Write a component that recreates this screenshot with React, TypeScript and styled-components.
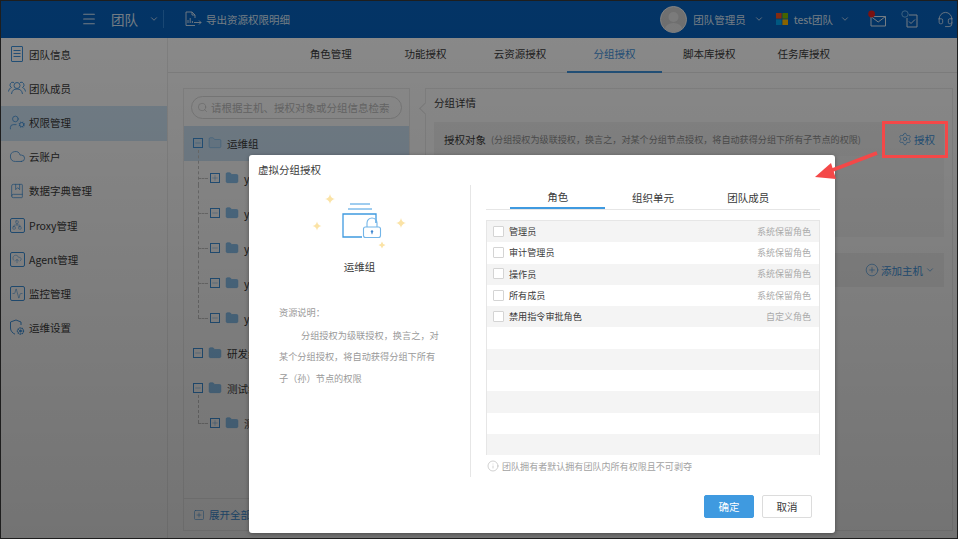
import React from "react";
import styled, { createGlobalStyle } from "styled-components";
import {
  Activity,
  BookMarked,
  ChevronDown,
  Cloud,
  CloudUpload,
  Headset,
  Info,
  Menu,
  Network,
  Search,
  Settings,
  UserCog,
  CirclePlus,
  Folder,
  Plus,
  Minus,
  SquarePlus,
} from "lucide-react";

const GlobalStyle = createGlobalStyle`
  html, body {
    margin: 0;
    padding: 0;
    background: #fff;
    font-family: "Noto Sans CJK SC", "Liberation Sans", sans-serif;
  }
`;

const Frame = styled.div`
  position: relative;
  width: 958px;
  height: 539px;
  box-sizing: border-box;
  border: 1px solid #1e1e1e;
  background: #fff;
  overflow: hidden;
  display: flex;
  flex-direction: column;
`;

const Header = styled.header`
  height: 37px;
  flex: none;
  box-sizing: border-box;
  background: #0660bc;
  color: #d8e6f4;
  display: flex;
  align-items: center;
  padding: 0 0 1px 80px;
  font-size: 10.5px;
`;

const TeamName = styled.span`
  font-size: 13.5px;
  margin-left: 14px;
  width: 38px;
`;

const HeaderDivider = styled.span`
  width: 1px;
  height: 18px;
  background: #2f84d6;
  margin: 0 20px 0 4px;
`;

const ExportLabel = styled.span`
  margin-left: 4px;
`;

const HeaderRight = styled.div`
  margin-left: auto;
  display: flex;
  align-items: center;
  padding-right: 3px;
`;

const Avatar = styled.div`
  width: 27px;
  height: 27px;
  border-radius: 50%;
  background: #cfcfcf;
  border: 1px solid #f2f2f2;
  box-sizing: border-box;
  overflow: hidden;
  margin-right: 6px;
`;

const HeaderIcon = styled.span<{ $ml?: number }>`
  display: flex;
  margin-left: ${(p) => p.$ml ?? 0}px;
`;

const Body = styled.div`
  flex: 1;
  min-height: 0;
  display: flex;
`;

const Sidebar = styled.nav`
  width: 166px;
  flex: none;
  background: #fff;
  border-right: 1px solid #ececec;
`;

const SideItem = styled.div<{ $active?: boolean }>`
  height: 34.2px;
  box-sizing: border-box;
  display: flex;
  align-items: center;
  gap: 4px;
  padding: 0 0 2px 8px;
  font-size: 10.5px;
  color: #3a3a3a;
  background: ${(p) => (p.$active ? "#d2e8f9" : "transparent")};
`;

const SideIcon = styled.span`
  width: 16px;
  height: 16px;
  flex: none;
  display: flex;
  align-items: center;
  justify-content: center;
  color: #3f93dc;
  svg {
    flex: none;
  }
`;

const IconFrame = styled.span`
  width: 15px;
  height: 15px;
  box-sizing: border-box;
  border: 1px solid #3f93dc;
  border-radius: 2px;
  display: flex;
  align-items: center;
  justify-content: center;
`;

const Main = styled.main`
  flex: 1;
  min-width: 0;
  display: flex;
  flex-direction: column;
  background: #fff;
`;

const TabBar = styled.div`
  height: 34px;
  flex: none;
  display: flex;
  padding-left: 115.5px;
  border-bottom: 1px solid #e8e8e8;
`;

const TopTab = styled.div<{ $active?: boolean }>`
  width: 94.6px;
  box-sizing: border-box;
  padding-bottom: 2px;
  display: flex;
  align-items: center;
  justify-content: center;
  font-size: 10.5px;
  color: ${(p) => (p.$active ? "#3f93dc" : "#3a3a3a")};
  border-bottom: ${(p) => (p.$active ? "2px solid #3f93dc" : "2px solid transparent")};
  margin-bottom: -1px;
`;

const Content = styled.div`
  flex: 1;
  min-height: 0;
  display: flex;
  gap: 15px;
  padding: 15px 4px 7px 15px;
`;

const TreePanel = styled.section`
  width: 227px;
  flex: none;
  border: 1px solid #ececec;
  box-sizing: border-box;
  display: flex;
  flex-direction: column;
`;

const SearchBox = styled.div`
  height: 23px;
  flex: none;
  box-sizing: border-box;
  margin: 7px;
  border: 1px solid #dcdcdc;
  border-radius: 12px;
  display: flex;
  align-items: center;
  gap: 3px;
  padding-left: 5px;
  font-size: 10.5px;
  color: #bdbdbd;
  white-space: nowrap;
  overflow: hidden;
`;

const TreeRow = styled.div<{ $level: number; $active?: boolean; $last?: boolean }>`
  position: relative;
  height: 35px;
  flex: none;
  box-sizing: border-box;
  display: flex;
  align-items: center;
  padding: 0 0 1px ${(p) => (p.$level ? 26 : 9)}px;
  font-size: 10.5px;
  color: #3a3a3a;
  background: ${(p) => (p.$active ? "#cfe5f7" : "transparent")};
  &::before {
    content: ${(p) => (p.$level ? '""' : "none")};
    position: absolute;
    left: 14px;
    top: -11px;
    width: 10px;
    height: ${(p) => (p.$last ? "28px" : "35px")};
    border-left: 1px dashed #c4c4c4;
  }
  &::after {
    content: ${(p) => (p.$level ? '""' : "none")};
    position: absolute;
    left: 14px;
    top: 17px;
    width: 10px;
    border-top: 1px dashed #c4c4c4;
  }
`;

const ToggleBox = styled.span`
  width: 10px;
  height: 10px;
  box-sizing: border-box;
  border: 1px solid #3f93dc;
  color: #3f93dc;
  display: flex;
  align-items: center;
  justify-content: center;
  flex: none;
  margin-right: 5px;
`;

const FolderWrap = styled.span`
  display: flex;
  color: #6db3ea;
  margin-right: 5px;
`;

const TreeFooter = styled.div`
  margin-top: auto;
  height: 31px;
  border-top: 1px solid #ececec;
  display: flex;
  align-items: center;
  gap: 4px;
  padding-left: 9px;
  font-size: 10.5px;
  color: #3f93dc;
`;

const DetailPanel = styled.section`
  position: relative;
  flex: 1;
  min-width: 0;
  border: 1px solid #ececec;
  padding: 0 8px;
  display: flex;
  flex-direction: column;
  &::before {
    content: "";
    position: absolute;
    left: -5px;
    top: 15px;
    width: 8px;
    height: 8px;
    background: #fff;
    border-left: 1px solid #e4e4e4;
    border-bottom: 1px solid #e4e4e4;
    transform: rotate(45deg);
  }
`;

const DetailTitle = styled.div`
  height: 33px;
  box-sizing: border-box;
  padding-bottom: 6px;
  display: flex;
  align-items: center;
  font-size: 10.5px;
  color: #3a3a3a;
`;

const GreyBar = styled.div`
  height: 34px;
  flex: none;
  background: #f3f3f3;
  display: flex;
  align-items: center;
  padding-left: 10px;
  font-size: 10.5px;
  color: #3a3a3a;
`;

const BarHint = styled.span`
  font-size: 9.1px;
  color: #8f8f8f;
  margin-left: 5px;
`;

const BarAction = styled.span`
  margin-left: auto;
  display: flex;
  align-items: center;
  gap: 2px;
  color: #3f93dc;
  font-size: 10.5px;
  padding-right: 9px;
`;

const EmptyBox = styled.div<{ $h: number }>`
  height: ${(p) => p.$h}px;
  flex: none;
  background: ${(p) => (p.$h > 30 ? "#f7f7f7" : "#fff")};
`;

const Backdrop = styled.div`
  position: absolute;
  inset: 0;
  background: linear-gradient(rgba(0, 0, 0, 0.46), rgba(0, 0, 0, 0.55));
  padding: 154px 0 0 248px;
`;

const Modal = styled.div`
  width: 586px;
  height: 378px;
  box-sizing: border-box;
  background: #fff;
  border-radius: 3px;
  box-shadow: 0 1px 4px rgba(0, 0, 0, 0.35);
  display: flex;
  flex-direction: column;
  color: #3a3a3a;
`;

const ModalTitle = styled.div`
  height: 30px;
  flex: none;
  box-sizing: border-box;
  display: flex;
  align-items: center;
  padding: 0 0 1px 9px;
  font-size: 10.5px;
`;

const ModalBody = styled.div`
  flex: 1;
  min-height: 0;
  display: flex;
  align-items: flex-start;
`;

const ResourceSide = styled.div`
  width: 222px;
  height: 292px;
  flex: none;
  box-sizing: border-box;
  border-right: 1px solid #e6e6e6;
  display: flex;
  flex-direction: column;
  align-items: center;
`;

const ResourceName = styled.div`
  font-size: 10.5px;
  margin-top: 4px;
`;

const ResourceNote = styled.div`
  align-self: stretch;
  padding: 0 31px 0 30px;
  margin-top: 28px;
  font-size: 9.2px;
  line-height: 21.5px;
  color: #9a9a9a;
`;

const NoteBody = styled.p`
  margin: 1px 0 0;
  text-indent: 22px;
`;

const RoleSide = styled.div`
  width: 334px;
  margin-left: 15px;
  flex: none;
`;

const RoleTabs = styled.div`
  height: 24px;
  display: flex;
  padding-left: 24px;
  border-bottom: 1px solid #e6e6e6;
`;

const RoleTab = styled.div<{ $active?: boolean }>`
  width: 95.3px;
  height: 24px;
  box-sizing: border-box;
  display: flex;
  align-items: center;
  justify-content: center;
  font-size: 10.5px;
  border-bottom: ${(p) => (p.$active ? "2px solid #3f9ae0" : "none")};
`;

const RoleList = styled.div`
  margin-top: 10px;
  height: 235px;
  box-sizing: border-box;
  border: 1px solid #e6e6e6;
  display: flex;
  flex-direction: column;
`;

const RoleRow = styled.div`
  height: 21.3px;
  flex: none;
  box-sizing: border-box;
  display: flex;
  align-items: center;
  padding: 0 8px 1px 6px;
  font-size: 9.1px;
  &:nth-child(odd) {
    background: #f4f4f4;
  }
`;

const Check = styled.span`
  width: 9px;
  height: 9px;
  border: 1px solid #d4d4d4;
  border-radius: 1px;
  background: #fff;
  margin-right: 5px;
  flex: none;
`;

const RoleKind = styled.span`
  margin-left: auto;
  color: #aaaaaa;
  font-size: 9px;
`;

const OwnerNote = styled.div`
  display: flex;
  align-items: center;
  gap: 3px;
  height: 22px;
  font-size: 9.05px;
  color: #a2a2a2;
  svg {
    margin-left: 1px;
  }
`;

const ModalFooter = styled.div`
  height: 38px;
  flex: none;
  display: flex;
  justify-content: flex-end;
  gap: 8px;
  padding-right: 23px;
`;

const Button = styled.button<{ $primary?: boolean }>`
  width: 50px;
  height: 23px;
  padding: 0;
  font-family: inherit;
  font-size: 10.5px;
  border-radius: 2px;
  border: 1px solid ${(p) => (p.$primary ? "#3f9ae0" : "#dcdcdc")};
  background: ${(p) => (p.$primary ? "#3f9ae0" : "#fff")};
  color: ${(p) => (p.$primary ? "#fff" : "#3a3a3a")};
`;

const RedBox = styled.div`
  position: absolute;
  left: 881px;
  top: 120px;
  width: 66px;
  height: 37px;
  box-sizing: border-box;
  border: 3px solid #f44848;
`;

const ArrowLayer = styled.svg`
  position: absolute;
  left: 805px;
  top: 145px;
`;

const DocIcon = () => (
  <svg width="14" height="16" viewBox="0 0 14 16" fill="none" stroke="currentColor" strokeWidth="1">
    <rect x="1.5" y="0.5" width="11" height="15" rx="0.5" />
    <path d="M3.5 4.5h7M3.5 7.5h7M3.5 10.5h7" />
  </svg>
);

const TeamIcon = () => (
  <svg width="18" height="14" viewBox="0 0 18 14" fill="none" stroke="currentColor" strokeWidth="0.9">
    <circle cx="9" cy="4.5" r="3" />
    <path d="M3.5 13c.4-3.5 2.500-5 5.500-5s5.100 1.500 5.500 5" />
    <path d="M6 1.500A2.600 2.600 0 0 0 3.500 6.500C2 7 .8 8.500.5 10.500" />
    <path d="M12 1.500a2.600 2.600 0 0 1 2.500 5c1.500.5 2.700 2 3 4" />
  </svg>
);

const GuardIcon = () => (
  <svg width="16" height="17" viewBox="0 0 16 17" fill="none" stroke="currentColor" strokeWidth="1">
    <path d="M7 1 1.500 3v6c0 3 2 5 4.500 6.200M7 1l5 2v3" />
    <circle cx="11.500" cy="12" r="3" strokeWidth="1.400" strokeDasharray="1.400 0.700" />
    <circle cx="11.500" cy="12" r="1" fill="currentColor" />
  </svg>
);

const sideItems = [
  { label: "团队信息", icon: <DocIcon /> },
  { label: "团队成员", icon: <TeamIcon /> },
  { label: "权限管理", icon: <UserCog size={17} strokeWidth={1.1} />, active: true },
  { label: "云账户", icon: <Cloud size={17} strokeWidth={1.1} /> },
  { label: "数据字典管理", icon: <BookMarked size={16} strokeWidth={1.1} /> },
  { label: "Proxy管理", icon: <IconFrame><Network size={10} strokeWidth={1.2} /></IconFrame> },
  { label: "Agent管理", icon: <IconFrame><CloudUpload size={10} strokeWidth={1.2} /></IconFrame> },
  { label: "监控管理", icon: <IconFrame><Activity size={11} strokeWidth={1.2} /></IconFrame> },
  { label: "运维设置", icon: <GuardIcon /> },
];

const topTabs = ["角色管理", "功能授权", "云资源授权", "分组授权", "脚本库授权", "任务库授权"];

const treeRows = [
  { label: "运维组", level: 0, open: true, active: true },
  { label: "y", level: 1, open: false },
  { label: "y", level: 1, open: true },
  { label: "y", level: 1, open: true },
  { label: "y", level: 1, open: true },
  { label: "y", level: 1, open: true, last: true },
  { label: "研发组", level: 0, open: true },
  { label: "测试组", level: 0, open: true },
  { label: "测试", level: 1, open: false, last: true },
];

const roles = [
  { name: "管理员", kind: "系统保留角色" },
  { name: "审计管理员", kind: "系统保留角色" },
  { name: "操作员", kind: "系统保留角色" },
  { name: "所有成员", kind: "系统保留角色" },
  { name: "禁用指令审批角色", kind: "自定义角色" },
  ...Array.from({ length: 6 }, () => ({ name: "", kind: "" })),
];

const Sparkle = ({ x, y, r }: { x: number; y: number; r: number }) => (
  <path
    d={`M${x} ${y - r}Q${x + r * 0.15} ${y - r * 0.15} ${x + r} ${y}Q${x + r * 0.15} ${y + r * 0.15} ${x} ${y + r}Q${x - r * 0.15} ${y + r * 0.15} ${x - r} ${y}Q${x - r * 0.15} ${y - r * 0.15} ${x} ${y - r}Z`}
    fill="#fbe3a6"
  />
);

const LockFolder = () => (
  <svg width="100" height="70" viewBox="0 0 100 70">
    <Sparkle x={20} y={14} r={5} />
    <Sparkle x={7} y={41} r={4.5} />
    <Sparkle x={91} y={38} r={5} />
    <Sparkle x={72} y={60} r={3.5} />
    <path d="M40 19h20M38 24h24" stroke="#3f9ae0" strokeWidth="1" fill="none" />
    <path d="M66 38V29H33v23h19" stroke="#3f9ae0" strokeWidth="1.3" fill="none" />
    <path d="M57 42v-4a5 5 0 0 1 10 0v4" stroke="#73b5e8" strokeWidth="1.1" fill="none" />
    <rect x="53.500" y="42" width="17" height="10.500" rx="2" fill="#fff" stroke="#73b5e8" strokeWidth="1.1" />
    <circle cx="62" cy="46.500" r="1.200" fill="#3f86d0" />
    <path d="M62 47v2.200" stroke="#3f86d0" strokeWidth="1" />
  </svg>
);

const MsLogo = () => (
  <svg width="12" height="12" viewBox="0 0 12 12">
    <rect width="5.6" height="5.6" fill="#f25022" />
    <rect x="6.4" width="5.6" height="5.6" fill="#7fba00" />
    <rect y="6.4" width="5.6" height="5.6" fill="#00a4ef" />
    <rect x="6.4" y="6.4" width="5.6" height="5.6" fill="#ffb900" />
  </svg>
);

const ExportIcon = () => (
  <svg width="18" height="18" viewBox="0 0 18 18" fill="none" stroke="#d8e6f4" strokeWidth="0.9">
    <path d="M11 15.500H2V2h6l3 3v3M8 2v3h3" />
    <path d="M4 13v-3M6.200 13V8M8.400 13v-2" />
    <path d="M10 12.500h7M15 10.500l2 2-2 2" />
  </svg>
);

const MailIcon = () => (
  <svg width="19" height="19" viewBox="0 0 19 19" fill="none" stroke="#d8e6f4" strokeWidth="1">
    <path d="M4 6.500h14.500V16H4zM4 6.500l7.200 5.500 7.300-5.500" />
    <circle cx="4.600" cy="4" r="3.400" fill="#e02020" stroke="none" />
  </svg>
);

const TaskIcon = () => (
  <svg width="19" height="19" viewBox="0 0 19 19" fill="none" stroke="#d8e6f4" strokeWidth="1">
    <path d="M9 5h8v12H7V8" />
    <path d="M9 11.500l2 2 4-4" />
    <circle cx="5" cy="4" r="3.200" stroke="#6fb5ee" />
  </svg>
);

const App = () => {
  return (
    <>
      <GlobalStyle />
      <Frame>
        <Header>
          <Menu size={16} strokeWidth={1.6} />
          <TeamName>团队</TeamName>
          <ChevronDown size={10} strokeWidth={2} />
          <HeaderDivider />
          <ExportIcon />
          <ExportLabel>导出资源权限明细</ExportLabel>
          <HeaderRight>
            <Avatar>
              <svg width="25" height="25" viewBox="0 0 25 25">
                <circle cx="12.5" cy="10" r="5" fill="#e4e4e4" />
                <ellipse cx="12.5" cy="22" rx="8.5" ry="6" fill="#e4e4e4" />
              </svg>
            </Avatar>
            团队管理员
            <HeaderIcon $ml={8}><ChevronDown size={10} strokeWidth={2} /></HeaderIcon>
            <HeaderIcon $ml={12}><MsLogo /></HeaderIcon>
            <HeaderIcon $ml={6}>test团队</HeaderIcon>
            <HeaderIcon $ml={7}><ChevronDown size={10} strokeWidth={2} /></HeaderIcon>
            <HeaderIcon $ml={17}><MailIcon /></HeaderIcon>
            <HeaderIcon $ml={14}><TaskIcon /></HeaderIcon>
            <HeaderIcon $ml={18}><Headset size={17} strokeWidth={1.2} /></HeaderIcon>
          </HeaderRight>
        </Header>
        <Body>
          <Sidebar>
            {sideItems.map((item) => (
              <SideItem key={item.label} $active={item.active}>
                <SideIcon>{item.icon}</SideIcon>
                {item.label}
              </SideItem>
            ))}
          </Sidebar>
          <Main>
            <TabBar>
              {topTabs.map((t) => (
                <TopTab key={t} $active={t === "分组授权"}>{t}</TopTab>
              ))}
            </TabBar>
            <Content>
              <TreePanel>
                <SearchBox>
                  <Search size={11} strokeWidth={1.2} />
                  请根据主机、授权对象或分组信息检索
                </SearchBox>
                {treeRows.map((row, i) => (
                  <TreeRow key={i} $level={row.level} $active={row.active} $last={row.last}>
                    <ToggleBox>
                      {row.open ? <Minus size={8} strokeWidth={1.2} /> : <Plus size={8} strokeWidth={1.2} />}
                    </ToggleBox>
                    <FolderWrap>
                      <Folder size={14} strokeWidth={1} fill="#8cc4f0" fillOpacity={row.active ? 0.25 : 1} />
                    </FolderWrap>
                    {row.label}
                  </TreeRow>
                ))}
                <TreeFooter>
                  <SquarePlus size={12} strokeWidth={1.1} />
                  展开全部
                </TreeFooter>
              </TreePanel>
              <DetailPanel>
                <DetailTitle>分组详情</DetailTitle>
                <GreyBar>
                  授权对象
                  <BarHint>(分组授权为级联授权，换言之，对某个分组节点授权，将自动获得分组下所有子节点的权限)</BarHint>
                  <BarAction>
                    <Settings size={14} strokeWidth={1.1} />
                    授权
                  </BarAction>
                </GreyBar>
                <EmptyBox $h={81} />
                <EmptyBox $h={16} />
                <GreyBar>
                  <BarAction>
                    <CirclePlus size={14} strokeWidth={1.1} />
                    添加主机
                    <ChevronDown size={10} strokeWidth={1.6} />
                  </BarAction>
                </GreyBar>
              </DetailPanel>
            </Content>
          </Main>
        </Body>
        <Backdrop>
          <Modal>
            <ModalTitle>虚拟分组授权</ModalTitle>
            <ModalBody>
              <ResourceSide>
                <LockFolder />
                <ResourceName>运维组</ResourceName>
                <ResourceNote>
                  资源说明：
                  <NoteBody>分组授权为级联授权，换言之，对某个分组授权，将自动获得分组下所有子（孙）节点的权限</NoteBody>
                </ResourceNote>
              </ResourceSide>
              <RoleSide>
                <RoleTabs>
                  <RoleTab $active>角色</RoleTab>
                  <RoleTab>组织单元</RoleTab>
                  <RoleTab>团队成员</RoleTab>
                </RoleTabs>
                <RoleList>
                  {roles.map((r, i) => (
                    <RoleRow key={i}>
                      {r.name && <Check />}
                      {r.name}
                      <RoleKind>{r.kind}</RoleKind>
                    </RoleRow>
                  ))}
                </RoleList>
                <OwnerNote>
                  <Info size={12} strokeWidth={1} />
                  团队拥有者默认拥有团队内所有权限且不可剥夺
                </OwnerNote>
              </RoleSide>
            </ModalBody>
            <ModalFooter>
              <Button $primary>确定</Button>
              <Button>取消</Button>
            </ModalFooter>
          </Modal>
        </Backdrop>
        <RedBox />
        <ArrowLayer width="80" height="40" viewBox="0 0 80 40">
          <path d="M71 7L24 25" stroke="#f44848" strokeWidth="3.6" />
          <path d="M9 31L25 17L30 33Z" fill="#f44848" />
        </ArrowLayer>
      </Frame>
    </>
  );
};

export default App;
